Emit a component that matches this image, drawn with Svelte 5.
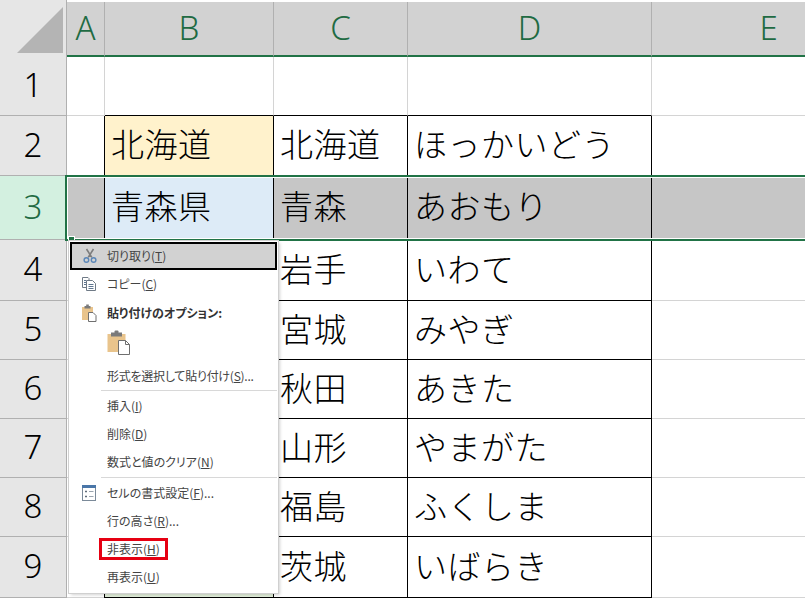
<script>
  const columns = ['A', 'B', 'C', 'D', 'E']
  const rows = [
    { n: 1, cells: ['', '', ''] },
    { n: 2, cells: ['北海道', '北海道', 'ほっかいどう'] },
    { n: 3, cells: ['青森県', '青森', 'あおもり'] },
    { n: 4, cells: ['', '岩手', 'いわて'] },
    { n: 5, cells: ['', '宮城', 'みやぎ'] },
    { n: 6, cells: ['', '秋田', 'あきた'] },
    { n: 7, cells: ['', '山形', 'やまがた'] },
    { n: 8, cells: ['', '福島', 'ふくしま'] },
    { n: 9, cells: ['', '茨城', 'いばらき'] }
  ]

  function cellClass(row, i) {
    let name = 'cell'
    if (row.n > 1) name += ' boxed'
    if (row.n === 1) name += ' above-table'
    if (row.n === 3) name += i === 0 ? ' fill-blue' : ' selected'
    if (row.n === 2 && i === 0) name += ' fill-yellow'
    if (row.n > 3 && i === 0) name += ' fill-green'
    if (i === 0) name += ' first'
    return name
  }
</script>

<div class="sheet">
  <div class="corner">
    <svg width="67" height="57" viewBox="0 0 67 57"><polygon points="17,53 63,7 63,53" fill="#b4b4b4" /></svg>
  </div>
  {#each columns as col}
    <div class="col-head">{col}</div>
  {/each}

  {#each rows as row}
    <div class="row-head" class:active={row.n === 3}>{row.n}</div>
    <div class="cell plain" class:selected={row.n === 3}></div>
    {#each row.cells as text, i}
      <div class={cellClass(row, i)}>{text}</div>
    {/each}
    <div class="cell plain" class:selected={row.n === 3} class:above-line={row.n === 1}></div>
  {/each}

  <div class="selection"><span class="handle"></span></div>

  <div class="menu">
    <div class="item hot">
      <span class="icon">
        <svg width="16" height="16" viewBox="0 0 16 16" fill="none">
          <path d="M4.5 1 L9.8 9.4 M11.5 1 L6.2 9.4" stroke="#7d7d7d" stroke-width="1.6" />
          <circle cx="4.4" cy="12" r="2.3" stroke="#5b87b8" stroke-width="1.4" />
          <circle cx="11.6" cy="12" r="2.3" stroke="#5b87b8" stroke-width="1.4" />
        </svg>
      </span>
      <span>切り取り(<u>T</u>)</span>
    </div>
    <div class="item">
      <span class="icon">
        <svg width="16" height="16" viewBox="0 0 16 16" fill="none" stroke="#6f7a86">
          <path d="M1.5 1.5 H7 L8 2.5 V4 M1.5 1.5 V11.5 H5" fill="#fff" />
          <path d="M5.5 4.5 H11.5 L14.5 7.5 V14.5 H5.5 Z" fill="#fff" />
          <path d="M3 4.5 H5 M3 6.5 H5 M3 8.5 H5 M7.5 8.5 H12.5 M7.5 10.5 H12.5 M7.5 12.5 H12.5" stroke="#5f7690" />
        </svg>
      </span>
      <span>コピー(<u>C</u>)</span>
    </div>
    <div class="item bold">
      <span class="icon">
        <svg width="16" height="18" viewBox="0 0 16 18" fill="none">
          <rect x="1" y="3" width="11" height="13" fill="#e9c48c" />
          <rect x="3.5" y="2" width="6" height="2.5" fill="#7a7a7a" />
          <rect x="5.2" y="0.5" width="2.6" height="2" fill="#7a7a7a" />
          <path d="M7.5 8.5 H12 L15 11.5 V17.5 H7.5 Z" fill="#fff" stroke="#6f6f6f" />
        </svg>
      </span>
      <span>貼り付けのオプション:</span>
    </div>
    <div class="paste-row">
      <svg width="24" height="25" viewBox="0 0 24 25" fill="none">
        <rect x="0.5" y="4" width="18" height="18" fill="#e9c48c" />
        <rect x="4" y="2.5" width="11" height="4" fill="#7a7a7a" />
        <rect x="7.5" y="0.5" width="4" height="3" rx="1" fill="#7a7a7a" />
        <path d="M11.5 10.5 H18.5 L22.5 14.5 V24.5 H11.5 Z" fill="#fff" stroke="#6f6f6f" />
        <path d="M18.5 10.5 V14.5 H22.5" stroke="#6f6f6f" />
      </svg>
    </div>
    <div class="item gapped"><span class="icon"></span><span class="tight">形式を選択して貼り付け(<u>S</u>)...</span></div>
    <div class="sep"></div>
    <div class="item"><span class="icon"></span><span>挿入(<u>I</u>)</span></div>
    <div class="item"><span class="icon"></span><span>削除(<u>D</u>)</span></div>
    <div class="item"><span class="icon"></span><span>数式と値のクリア(<u>N</u>)</span></div>
    <div class="sep lower"></div>
    <div class="item">
      <span class="icon">
        <svg width="14" height="16" viewBox="0 0 14 16" fill="none">
          <rect x="0.5" y="0.5" width="13" height="15" fill="#fff" stroke="#7b8a99" />
          <rect x="0" y="0" width="14" height="3" fill="#4a76a8" />
          <path d="M3 6.5 H5 M3 11.5 H5" stroke="#5f6b78" stroke-width="1.4" />
          <path d="M7 6.5 H11.5 M7 11.5 H11.5" stroke="#9aa4ae" />
        </svg>
      </span>
      <span>セルの書式設定(<u>F</u>)...</span>
    </div>
    <div class="item"><span class="icon"></span><span>行の高さ(<u>R</u>)...</span></div>
    <div class="item">
      <span class="icon"></span>
      <span class="marked">非表示(<u>H</u>)</span>
    </div>
    <div class="item"><span class="icon"></span><span>再表示(<u>U</u>)</span></div>
  </div>
</div>

<style>
  :global(body) {
    margin: 0;
    background: #fff;
    overflow: hidden;
  }

  .sheet {
    position: relative;
    display: grid;
    grid-template-columns: 67px 38px 169px 134px 244px 234px;
    grid-template-rows: 57px 59px 60px 64px 61px 59px 59px 59px 59px 61px;
    width: 886px;
    height: 598px;
    overflow: hidden;
    font-family: 'Noto Sans CJK JP', 'Noto Sans', sans-serif;
    font-weight: 300;
    color: #000;
  }

  .corner {
    background: #e6e6e6;
    border-right: 1px solid #b0b0b0;
    box-sizing: border-box;
    height: 57px;
  }

  .corner svg {
    display: block;
  }

  .col-head {
    display: flex;
    align-items: center;
    justify-content: center;
    box-sizing: border-box;
    margin-top: 2px;
    padding-bottom: 3px;
    background: #d2d2d2;
    border-right: 1px solid #b0b0b0;
    border-bottom: 2px solid #217346;
    color: #1f6b43;
    font-family: 'Noto Sans', sans-serif;
    font-size: 33px;
    line-height: 1;
  }

  .row-head {
    display: flex;
    align-items: center;
    justify-content: center;
    box-sizing: border-box;
    padding-bottom: 3px;
    background: #e6e6e6;
    border-right: 1px solid #b0b0b0;
    border-bottom: 1px solid #b0b0b0;
    font-family: 'Noto Sans', sans-serif;
    font-size: 33px;
    line-height: 1;
  }

  .row-head.active {
    background: #d3f0e0;
    color: #1f6b43;
  }

  .cell {
    display: flex;
    align-items: center;
    box-sizing: border-box;
    padding-left: 6px;
    padding-bottom: 4px;
    font-size: 33px;
    letter-spacing: 0.5px;
    line-height: 1;
    white-space: nowrap;
    overflow: hidden;
  }

  .plain {
    border-right: 1px solid #d4d4d4;
    border-bottom: 1px solid #d4d4d4;
  }

  .plain.selected {
    border-color: #c6c6c6;
  }

  .above-table {
    border-right: 1px solid #d4d4d4;
    border-bottom: 1px solid #000;
  }

  .above-line {
    border-right: none;
  }

  .boxed {
    border-right: 1px solid #000;
    border-bottom: 1px solid #000;
  }

  .first.boxed {
    box-shadow: -1px 0 0 #000;
  }

  .fill-yellow {
    background: #fff2cc;
  }

  .fill-blue {
    background: #ddebf7;
  }

  .fill-green {
    background: #e2efda;
  }

  .selected {
    background: #c6c6c6;
  }

  .selection {
    position: absolute;
    left: 65px;
    top: 175px;
    width: 760px;
    height: 66px;
    box-sizing: border-box;
    border: 2px solid #217346;
    box-shadow: inset 0 0 0 1px #fff;
  }

  .handle {
    position: absolute;
    left: 1px;
    bottom: -4px;
    width: 5px;
    height: 5px;
    background: #217346;
    border: 1px solid #fff;
  }

  .menu {
    position: absolute;
    left: 69px;
    top: 241px;
    width: 209px;
    height: 352px;
    box-sizing: border-box;
    padding: 1px;
    background: #fff;
    box-shadow: 0 0 0 1px #d0d0d0, 2px 2px 3px rgba(0, 0, 0, 0.18);
    font-size: 12px;
    font-weight: 400;
    font-feature-settings: 'palt';
    color: #444;
  }

  .item {
    display: flex;
    align-items: center;
    height: 28px;
    line-height: 1;
    white-space: nowrap;
  }

  .item.gapped {
    margin-top: 5px;
  }

  .tight {
    letter-spacing: -0.25px;
  }

  .item.hot {
    box-sizing: border-box;
    background: #d2d2d2;
    border: 2px solid #000;
  }

  .hot .icon {
    width: 35px;
  }

  .bold {
    margin-top: 1px;
    font-weight: 700;
    color: #333;
  }

  .icon {
    display: flex;
    align-items: center;
    justify-content: center;
    flex: none;
    width: 37px;
  }

  .paste-row {
    display: flex;
    align-items: center;
    height: 30px;
    padding-left: 37px;
  }

  .sep {
    height: 1px;
    margin: 0 0 1px 31px;
    background: #d8d8d8;
  }

  .sep.lower {
    margin-top: 1px;
  }

  .marked {
    display: inline-flex;
    align-items: center;
    box-sizing: border-box;
    height: 22px;
    margin-left: -8px;
    padding: 0 5px;
    border: 3px solid #e60012;
    white-space: pre;
  }
</style>
